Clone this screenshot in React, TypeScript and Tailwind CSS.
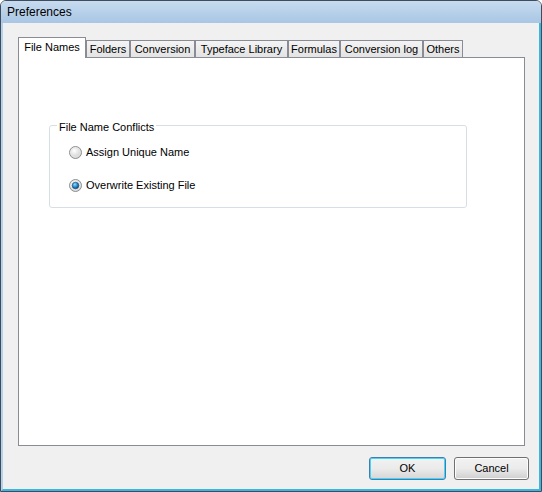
import React from "react";

const font = { fontFamily: '"Liberation Sans", Arial, sans-serif' };

function Radio({ checked }: { checked: boolean }) {
  return (
    <svg width="13" height="13" viewBox="0 0 13 13" className="shrink-0">
      <defs>
        <radialGradient id={checked ? "rc" : "ru"} cx="0.4" cy="0.35" r="0.7">
          <stop offset="0" stopColor="#ffffff" />
          <stop offset="1" stopColor="#c9c9c9" />
        </radialGradient>
        <radialGradient id="dot" cx="0.4" cy="0.35" r="0.7">
          <stop offset="0" stopColor="#8fe0ff" />
          <stop offset="0.6" stopColor="#1f7fbf" />
          <stop offset="1" stopColor="#0b3f6e" />
        </radialGradient>
      </defs>
      <circle cx="6.5" cy="6.5" r="6" fill={`url(#${checked ? "rc" : "ru"})`} stroke="#8e8f8f" strokeWidth="1" />
      <circle cx="6.5" cy="6.5" r="4.6" fill="none" stroke="#e8e8e8" strokeWidth="0.8" />
      {checked && <circle cx="6.5" cy="6.5" r="3.3" fill="url(#dot)" stroke="#124b78" strokeWidth="0.6" />}
    </svg>
  );
}

const tabs: { label: string; w: string }[] = [
  { label: "Folders", w: "w-[44px]" },
  { label: "Conversion", w: "w-[65px]" },
  { label: "Typeface Library", w: "w-[93px]" },
  { label: "Formulas", w: "w-[52px]" },
  { label: "Conversion log", w: "w-[83px]" },
  { label: "Others", w: "w-[40px]" },
];

export default function App() {
  return (
    <div className="w-[542px] h-[492px] text-[11px] text-black" style={font}>
      <div className="w-[542px] h-[492px] border border-[#3e4c5c] rounded-t-[6px] flex flex-col overflow-hidden">
        <div className="h-[22px] shrink-0 bg-gradient-to-b from-[#c7dbef] to-[#a9c6e4] flex items-center pl-[6px] text-[12px] text-black">
          Preferences
        </div>
        <div className="flex-1 flex flex-col bg-[#f0f0f0] border-l-2 border-l-[#b5d2ea] border-r-2 border-r-[#3ab6e0] border-b-2 border-b-[#3ab6e0] pt-[14px] pl-[15px] pr-[13px]">
          <div className="h-[20px] flex items-end">
            <div className="relative z-10 -mb-px w-[68px] h-[21px] bg-white border border-b-0 border-[#898c95] flex items-center justify-center pb-[1px]">
              File Names
            </div>
            {tabs.map((t) => (
              <div
                key={t.label}
                className={`${t.w} h-[17px] border border-b-0 border-[#898c95] bg-gradient-to-b from-[#f4f4f4] to-[#e3e3e3] flex items-center justify-center leading-none pt-px`}
              >
                {t.label}
              </div>
            ))}
          </div>
          <div className="w-[507px] h-[389px] bg-white border border-[#898c95] pt-[67px] pl-[30px]">
            <fieldset className="w-[418px] h-[91px] border border-[#d5dfe5] rounded-[3px] -mt-[8px]">
              <legend className="ml-[7px] px-[2px] pt-[4px] leading-[12px]">File Name Conflicts</legend>
              <div className="flex flex-col pl-[19px] pt-[13px] gap-[20px]">
                <div className="flex items-center gap-[4px] h-[13px]">
                  <Radio checked={false} />
                  <span>Assign Unique Name</span>
                </div>
                <div className="flex items-center gap-[4px] h-[13px]">
                  <Radio checked={true} />
                  <span>Overwrite Existing File</span>
                </div>
              </div>
            </fieldset>
          </div>
          <div className="flex justify-end gap-[8px] mt-[11px] -mr-[3px]">
            <button className="w-[77px] h-[23px] rounded-[3px] border border-[#3c7fb1] bg-gradient-to-b from-[#f2f2f2] via-[#ebebeb] to-[#d6d6d6] shadow-[inset_0_0_0_1px_#48d4f4] text-[11px]">
              OK
            </button>
            <button className="w-[75px] h-[23px] rounded-[3px] border border-[#707070] bg-gradient-to-b from-[#f2f2f2] via-[#ebebeb] to-[#cfcfcf] shadow-[inset_0_0_0_1px_#fcfcfc] text-[11px]">
              Cancel
            </button>
          </div>
        </div>
      </div>
    </div>
  );
}
